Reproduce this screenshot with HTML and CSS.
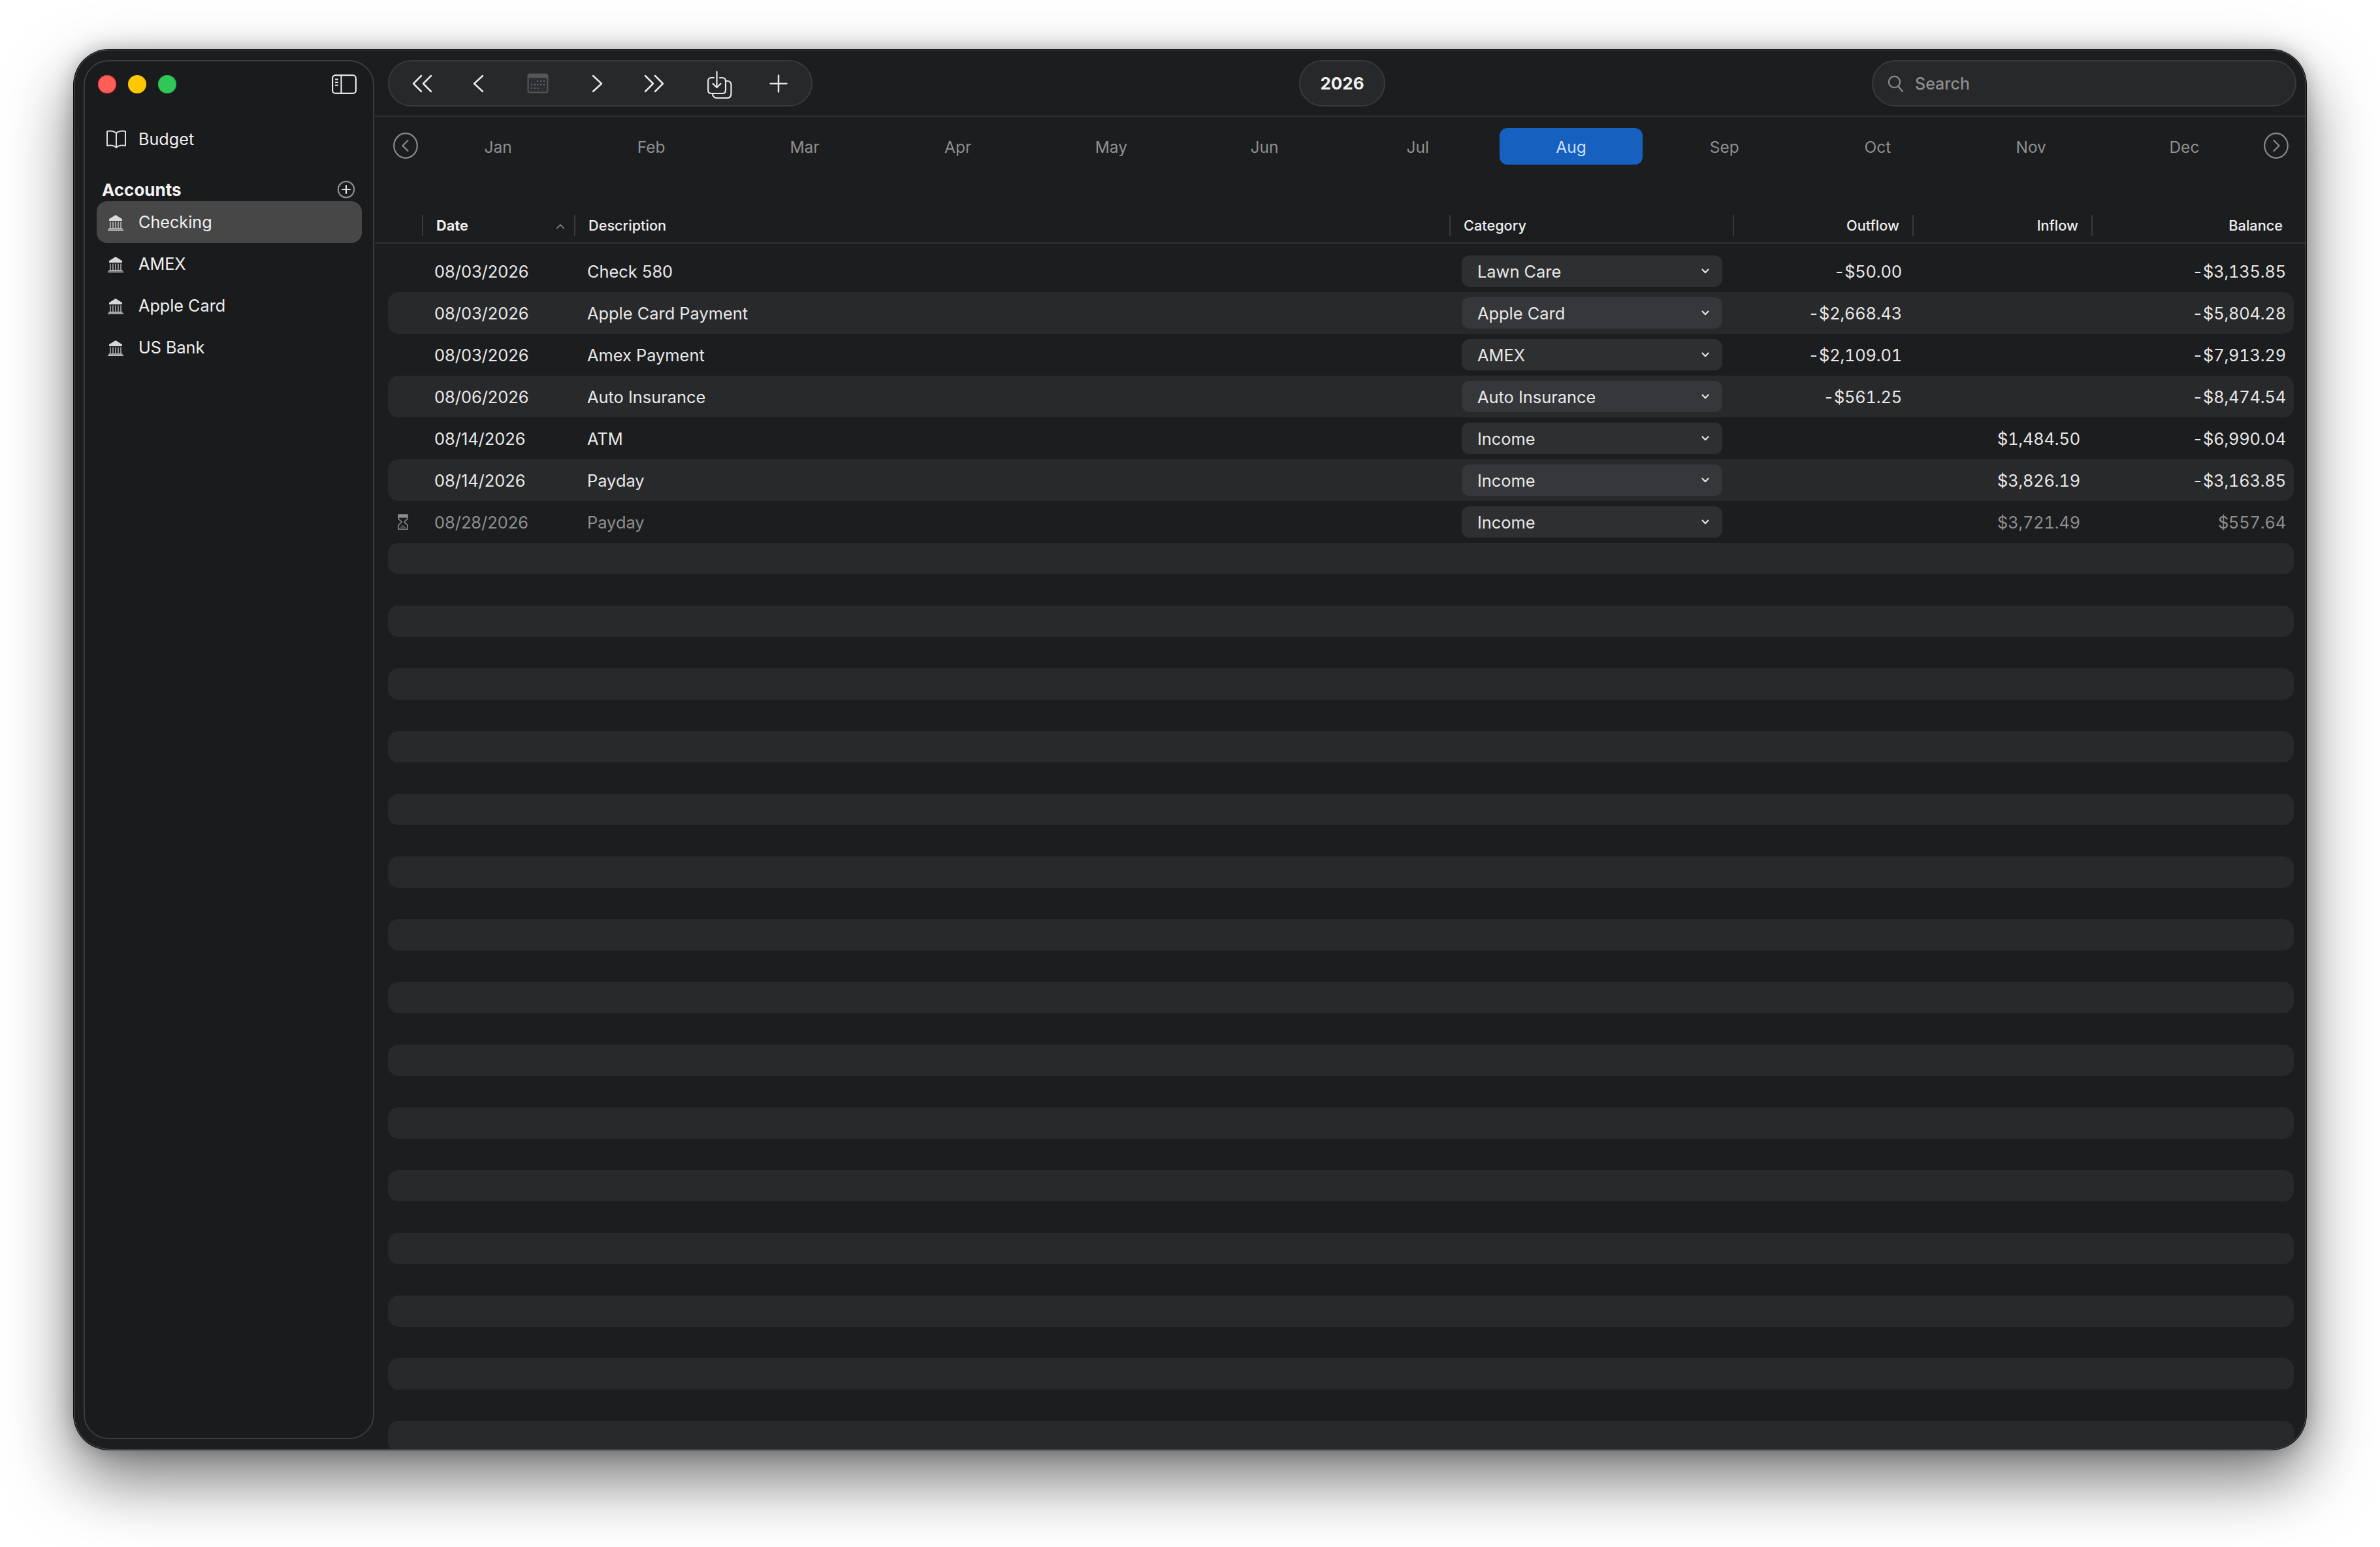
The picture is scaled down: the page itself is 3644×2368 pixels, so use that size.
FILE: index.html
```html
<!DOCTYPE html>
<html lang="en">
<head>
<meta charset="utf-8">
<title>Budget</title>
<link rel="stylesheet" href="styles.css">
</head>
<body>
<svg class="defs" width="0" height="0" aria-hidden="true">
  <symbol id="bank" viewBox="0 0 24 24">
    <path d="M12 0 L22 6.2 V9 H2 V6.2 Z" fill="currentColor"/>
    <path d="M4 10.5 V20 M8 10.5 V20 M12 10.5 V20 M16 10.5 V20 M20 10.5 V20" fill="none" stroke="currentColor" stroke-width="1.2"/>
    <path d="M1.5 21 H22.5 M0 23.2 H24" fill="none" stroke="currentColor" stroke-width="1.4"/>
  </symbol>
  <symbol id="chev" viewBox="0 0 12 8">
    <path d="M1.5 1.5 L6 6.2 L10.5 1.5" fill="none" stroke="currentColor" stroke-width="2.1" stroke-linecap="round" stroke-linejoin="round"/>
  </symbol>
</svg>

<div class="window">
  <aside class="sidebar">
    <div class="side-head">
      <div class="lights"><span class="light red"></span><span class="light yellow"></span><span class="light green"></span></div>
      <svg class="toggle" viewBox="0 0 38 30" fill="none" stroke="currentColor" stroke-width="2.2">
        <rect x="1.1" y="1.1" width="35.8" height="27.8" rx="4.5"/>
        <path d="M14.5 1 V29"/>
        <path d="M5 7.5 H10 M5 12 H10 M5 16.5 H10" stroke-width="2"/>
      </svg>
    </div>
    <div class="side-item budget">
      <svg class="book" viewBox="0 0 32 28" fill="none" stroke="currentColor" stroke-width="2" stroke-linejoin="round">
        <path d="M16 5 C13 2 8 1 2 2 V24 C8 23 13 24 16 27 C19 24 24 23 30 24 V2 C24 1 19 2 16 5 Z"/>
        <path d="M16 5 V27"/>
      </svg>
      <span>Budget</span>
    </div>
    <div class="section">
      <span class="section-title">Accounts</span>
      <svg class="add" viewBox="0 0 28 28" fill="none" stroke="currentColor" stroke-width="2.2">
        <circle cx="14" cy="14" r="12.2"/>
        <path d="M14 8 V20 M8 14 H20" stroke="#e0e0e0" stroke-linecap="round"/>
      </svg>
    </div>
    <div class="side-item active"><svg class="bank"><use href="#bank"/></svg><span>Checking</span></div>
    <div class="side-item"><svg class="bank"><use href="#bank"/></svg><span>AMEX</span></div>
    <div class="side-item"><svg class="bank"><use href="#bank"/></svg><span>Apple Card</span></div>
    <div class="side-item"><svg class="bank"><use href="#bank"/></svg><span>US Bank</span></div>
  </aside>

  <main class="main">
    <header class="toolbar">
      <div class="pill tools">
        <svg class="tool t-dbl" viewBox="0 0 32 28" fill="none" stroke="currentColor" stroke-width="2.5" stroke-linecap="round" stroke-linejoin="round"><path d="M14 2 L2 14 L14 26 M29 2 L17 14 L29 26"/></svg>
        <svg class="tool t-sgl" viewBox="0 0 17 28" fill="none" stroke="currentColor" stroke-width="2.5" stroke-linecap="round" stroke-linejoin="round"><path d="M15 2 L2 14 L15 26"/></svg>
        <svg class="tool t-cal" viewBox="0 0 33 31">
          <rect x="0.5" y="0.5" width="32" height="30" rx="3.5" fill="#55565a"/>
          <rect x="2.5" y="7" width="28" height="21.5" rx="1" fill="#2e2f32"/>
          <g fill="#6d6e72"><circle cx="16" cy="12" r="1.1"/><circle cx="21" cy="12" r="1.1"/><circle cx="26" cy="12" r="1.1"/><circle cx="7" cy="17.5" r="1.1"/><circle cx="12" cy="17.5" r="1.1"/><circle cx="16.5" cy="17.5" r="1.1"/><circle cx="21" cy="17.5" r="1.1"/><circle cx="26" cy="17.5" r="1.1"/><circle cx="7" cy="23" r="1.1"/><circle cx="12" cy="23" r="1.1"/><circle cx="16.5" cy="23" r="1.1"/></g>
        </svg>
        <svg class="tool t-sgr" viewBox="0 0 17 28" fill="none" stroke="currentColor" stroke-width="2.5" stroke-linecap="round" stroke-linejoin="round"><path d="M2 2 L15 14 L2 26"/></svg>
        <svg class="tool t-dbr" viewBox="0 0 32 28" fill="none" stroke="currentColor" stroke-width="2.5" stroke-linecap="round" stroke-linejoin="round"><path d="M3 2 L15 14 L3 26 M18 2 L30 14 L18 26"/></svg>
        <svg class="tool t-imp" viewBox="0 0 38 42" fill="none" stroke="currentColor" stroke-width="2.2" stroke-linecap="round" stroke-linejoin="round">
          <path d="M10 10 H6 C3 10 1.2 12 1.2 15 V29 C1.2 32 3 34 6 34 H23 C26 34 28 32 28 29 V15 C28 12 26 10 23 10 H19"/>
          <path d="M14.5 1 V25 M8.5 19 L14.5 25 L20.5 19"/>
          <path d="M28 15 H30 C34 15 36.5 17 36.5 21 V34 C36.5 38.5 34 41 30 41 H15 C10 41 8 38 8 34.5"/>
        </svg>
        <svg class="tool t-plus" viewBox="0 0 28 28" fill="none" stroke="currentColor" stroke-width="2.5" stroke-linecap="round"><path d="M14 1.5 V26.5 M1.5 14 H26.5"/></svg>
      </div>
      <div class="pill year">2026</div>
      <div class="pill search">
        <svg class="glass" viewBox="0 0 24 26" fill="none" stroke="currentColor" stroke-width="2.2" stroke-linecap="round"><circle cx="10.5" cy="10.5" r="8.6"/><path d="M16.6 17.2 L23 25"/></svg>
        <span>Search</span>
      </div>
    </header>

    <nav class="months">
      <svg class="nav-circle" viewBox="0 0 38 40" fill="none" stroke="currentColor" stroke-width="2.2"><ellipse cx="19" cy="20" rx="17.8" ry="18.8"/><path d="M22.5 12 L14.5 20 L22.5 28" stroke-linecap="round" stroke-linejoin="round"/></svg>
      <div class="month-list">
        <span class="month">Jan</span><span class="month">Feb</span><span class="month">Mar</span><span class="month">Apr</span><span class="month">May</span><span class="month">Jun</span><span class="month">Jul</span><span class="month current">Aug</span><span class="month">Sep</span><span class="month">Oct</span><span class="month">Nov</span><span class="month">Dec</span>
      </div>
      <svg class="nav-circle" viewBox="0 0 38 40" fill="none" stroke="currentColor" stroke-width="2.2"><ellipse cx="19" cy="20" rx="17.8" ry="18.8"/><path d="M15.5 12 L23.5 20 L15.5 28" stroke-linecap="round" stroke-linejoin="round"/></svg>
    </nav>

    <div class="thead-wrap">
      <div class="cols thead">
        <div class="th"></div>
        <div class="th date-th">Date<svg class="sort" viewBox="0 0 12 8"><path d="M1.5 6.5 L6 1.8 L10.5 6.5" fill="none" stroke="currentColor" stroke-width="1.4" stroke-linecap="round" stroke-linejoin="round"/></svg></div>
        <div class="th">Description</div>
        <div class="th">Category</div>
        <div class="th num">Outflow</div>
        <div class="th num">Inflow</div>
        <div class="th num last">Balance</div>
      </div>
    </div>

    <div class="tbody">
      <div class="cols row"><div></div><div class="c-date">08/03/2026</div><div class="c-desc">Check 580</div><div class="c-cat"><div class="select"><span>Lawn Care</span><svg class="chev"><use href="#chev"/></svg></div></div><div class="c-out">-$50.00</div><div class="c-in"></div><div class="c-bal">-$3,135.85</div></div>
      <div class="cols row"><div></div><div class="c-date">08/03/2026</div><div class="c-desc">Apple Card Payment</div><div class="c-cat"><div class="select"><span>Apple Card</span><svg class="chev"><use href="#chev"/></svg></div></div><div class="c-out">-$2,668.43</div><div class="c-in"></div><div class="c-bal">-$5,804.28</div></div>
      <div class="cols row"><div></div><div class="c-date">08/03/2026</div><div class="c-desc">Amex Payment</div><div class="c-cat"><div class="select"><span>AMEX</span><svg class="chev"><use href="#chev"/></svg></div></div><div class="c-out">-$2,109.01</div><div class="c-in"></div><div class="c-bal">-$7,913.29</div></div>
      <div class="cols row"><div></div><div class="c-date">08/06/2026</div><div class="c-desc">Auto Insurance</div><div class="c-cat"><div class="select"><span>Auto Insurance</span><svg class="chev"><use href="#chev"/></svg></div></div><div class="c-out">-$561.25</div><div class="c-in"></div><div class="c-bal">-$8,474.54</div></div>
      <div class="cols row"><div></div><div class="c-date">08/14/2026</div><div class="c-desc">ATM</div><div class="c-cat"><div class="select"><span>Income</span><svg class="chev"><use href="#chev"/></svg></div></div><div class="c-out"></div><div class="c-in">$1,484.50</div><div class="c-bal">-$6,990.04</div></div>
      <div class="cols row"><div></div><div class="c-date">08/14/2026</div><div class="c-desc">Payday</div><div class="c-cat"><div class="select"><span>Income</span><svg class="chev"><use href="#chev"/></svg></div></div><div class="c-out"></div><div class="c-in">$3,826.19</div><div class="c-bal">-$3,163.85</div></div>
      <div class="cols row pending"><div class="c-flag"><svg class="hourglass" viewBox="0 0 16 24"><path d="M1 1 H15 V6 C15 9 11 10 10 12 C11 14 15 15 15 18 V23 H1 V18 C1 15 5 14 6 12 C5 10 1 9 1 6 Z" fill="none" stroke="currentColor" stroke-width="1.6"/><path d="M1 1 H15 V5.5 H1 Z" fill="currentColor"/><path d="M3.5 21 C4.5 18.5 7 17 8 16.5 C9 17 11.5 18.5 12.5 21 Z" fill="currentColor" opacity=".4"/></svg></div><div class="c-date">08/28/2026</div><div class="c-desc">Payday</div><div class="c-cat"><div class="select"><span>Income</span><svg class="chev"><use href="#chev"/></svg></div></div><div class="c-out"></div><div class="c-in">$3,721.49</div><div class="c-bal">$557.64</div></div>
      <div class="bars">
        <div class="bar"></div><div class="bar"></div><div class="bar"></div><div class="bar"></div><div class="bar"></div>
        <div class="bar"></div><div class="bar"></div><div class="bar"></div><div class="bar"></div><div class="bar"></div>
        <div class="bar"></div><div class="bar"></div><div class="bar"></div><div class="bar"></div><div class="bar"></div>
      </div>
    </div>
  </main>
</div>
</body>
</html>
```

FILE: styles.css
```css
* { box-sizing: border-box; }
html, body { margin: 0; height: 100%; }
body {
  background: #fff;
  padding: 76px 113px 149px;
  font-family: Inter, "Liberation Sans", sans-serif;
  font-size: 25.4px;
  color: #e8e8e8;
  overflow: hidden;
}
.defs { position: absolute; }

.window {
  height: 100%;
  display: flex;
  background: #1c1d1f;
  border: 1px solid #58585a;
  border-radius: 54px;
  overflow: hidden;
  box-shadow: 0 0 0 1px #0a0a0a, 0 44px 100px rgba(0, 0, 0, .55), 0 0 30px rgba(0, 0, 0, .25);
}

/* Sidebar */
.sidebar {
  width: 445px;
  margin: 15px 1px 15px 14px;
  padding: 0 17px 0 18px;
  background: #1a1b1d;
  border: 2px solid #3b3c3f;
  border-radius: 38px;
  flex: none;
}
.side-head {
  height: 70px;
  display: flex;
  align-items: center;
  justify-content: space-between;
  padding: 0 8px 0 2px;
}
.lights { display: flex; gap: 18px; }
.light { width: 28px; height: 28px; border-radius: 50%; }
.red { background: #ff5f57; box-shadow: inset 0 0 0 1px #e0323a; }
.yellow { background: #fdc800; }
.green { background: #30c758; box-shadow: inset 0 0 0 1px #1faf44; }
.toggle { width: 38px; height: 30px; color: #e6e6e6; }

.side-item {
  height: 64px;
  display: flex;
  align-items: center;
  padding-left: 17px;
  border-radius: 16px;
  color: #f0f0f0;
  font-size: 25.2px;
}
.side-item > span { margin-left: 23px; }
.budget { margin-top: 17px; padding-left: 14px; }
.budget > span { margin-left: 18px; }
.book { width: 32px; height: 28px; color: #e0e0e0; }
.bank { width: 24px; height: 24px; color: #d8d8d8; margin-top: 1px; }
.active { background: #474747; }

.section {
  height: 36px;
  margin-top: 27px;
  display: flex;
  align-items: center;
  justify-content: space-between;
  padding: 0 10px 0 8px;
  font-weight: 700;
  font-size: 26px;
  color: #f2f2f2;
}
.add { width: 28px; height: 28px; color: #8e8e8e; }

/* Main */
.main { flex: 1; min-width: 0; display: flex; flex-direction: column; }
.toolbar {
  height: 102px;
  padding: 15px 14px 0 20px;
  display: grid;
  grid-template-columns: 1fr auto 1fr;
  align-items: start;
  border-bottom: 2px solid #303134;
}
.pill {
  height: 71px;
  background: #27282a;
  border: 2px solid #393a3e;
  border-radius: 36px;
}
.tools { width: 650px; display: flex; align-items: center; color: #e8e8e8; }
.tool { flex: none; }
.t-dbl { width: 32px; height: 28px; margin-left: 35px; }
.t-sgl { width: 17px; height: 28px; margin-left: 61px; }
.t-cal { width: 33px; height: 31px; margin-left: 66px; margin-top: -1px; }
.t-sgr { width: 17px; height: 28px; margin-left: 66px; }
.t-dbr { width: 32px; height: 28px; margin-left: 62px; }
.t-imp { width: 38px; height: 42px; margin-left: 66px; margin-top: 4px; }
.t-plus { width: 28px; height: 28px; margin-left: 57px; }

.year {
  width: 132px;
  display: flex;
  align-items: center;
  justify-content: center;
  font-weight: 700;
  font-size: 26px;
  color: #f0f0f0;
}
.search {
  width: 650px;
  justify-self: end;
  display: flex;
  align-items: center;
  padding: 1px 0 0 22px;
  color: #8e8e90;
  font-size: 25px;
  font-weight: 500;
}
.glass { width: 24px; height: 26px; margin-right: 18px; }

.months {
  padding: 17px 26px 0 28px;
  display: flex;
  align-items: flex-start;
}
.nav-circle { width: 38px; height: 40px; flex: none; color: #8a8a8a; margin-top: 7px; }
.month-list { flex: 1; display: flex; justify-content: space-between; margin: 0 12px 0 13px; }
.month {
  width: 219px;
  height: 56px;
  display: flex;
  align-items: center;
  justify-content: center;
  border-radius: 12px;
  color: #8f8f8f;
  font-size: 24.5px;
  padding-top: 2px;
}
.current { background: #1660c0; color: #cfe0ff; }

.cols {
  display: grid;
  grid-template-columns: 54px 233px 1340px 434px 275px 274px 308px;
}
.thead-wrap {
  margin-top: 77px;
  padding: 0 18px 10px 20px;
  border-bottom: 2px solid #303134;
}
.th {
  height: 32px;
  display: flex;
  align-items: center;
  justify-content: space-between;
  padding: 0 14px 0 20px;
  border-right: 2px solid #38393c;
  font-size: 21.7px;
  font-weight: 500;
  color: #eeeeee;
}
.date-th { font-weight: 700; }
.th.num { justify-content: flex-end; padding: 0 20px 0 0; }
.th.last { border-right: 0; padding-right: 17px; }
.sort { width: 14px; height: 9px; color: #8e8e8e; margin-top: 2px; }

.tbody { padding: 10px 18px 0 20px; flex: 1; min-height: 0; }
.row { height: 64px; align-items: center; border-radius: 16px; }
.row:nth-child(even) { background: #28292b; }
.row:nth-child(even) .select { background: #36373a; }
.c-date { padding-left: 17px; }
.c-desc { padding-left: 18px; }
.c-cat { padding-left: 17px; }
.c-out, .c-in, .c-bal { text-align: right; letter-spacing: -.2px; font-variant-numeric: tabular-nums; }
.c-out { padding-right: 18px; }
.c-in { padding-right: 19px; }
.c-bal { padding-right: 12px; }
.c-flag { display: flex; justify-content: center; padding-right: 8px; }
.hourglass { width: 16px; height: 24px; }
.pending { color: #8f8f8f; }

.select {
  width: 399px;
  height: 48px;
  display: flex;
  align-items: center;
  justify-content: space-between;
  padding: 0 20px 0 24px;
  background: #2e2f31;
  border-radius: 12px;
  color: #e8e8e8;
}
.chev { width: 12px; height: 8px; color: #e8e8e8; }

.bars { display: flex; flex-direction: column; gap: 48px; }
.bar { height: 48px; flex: none; background: #28292b; border-radius: 16px; }
```
